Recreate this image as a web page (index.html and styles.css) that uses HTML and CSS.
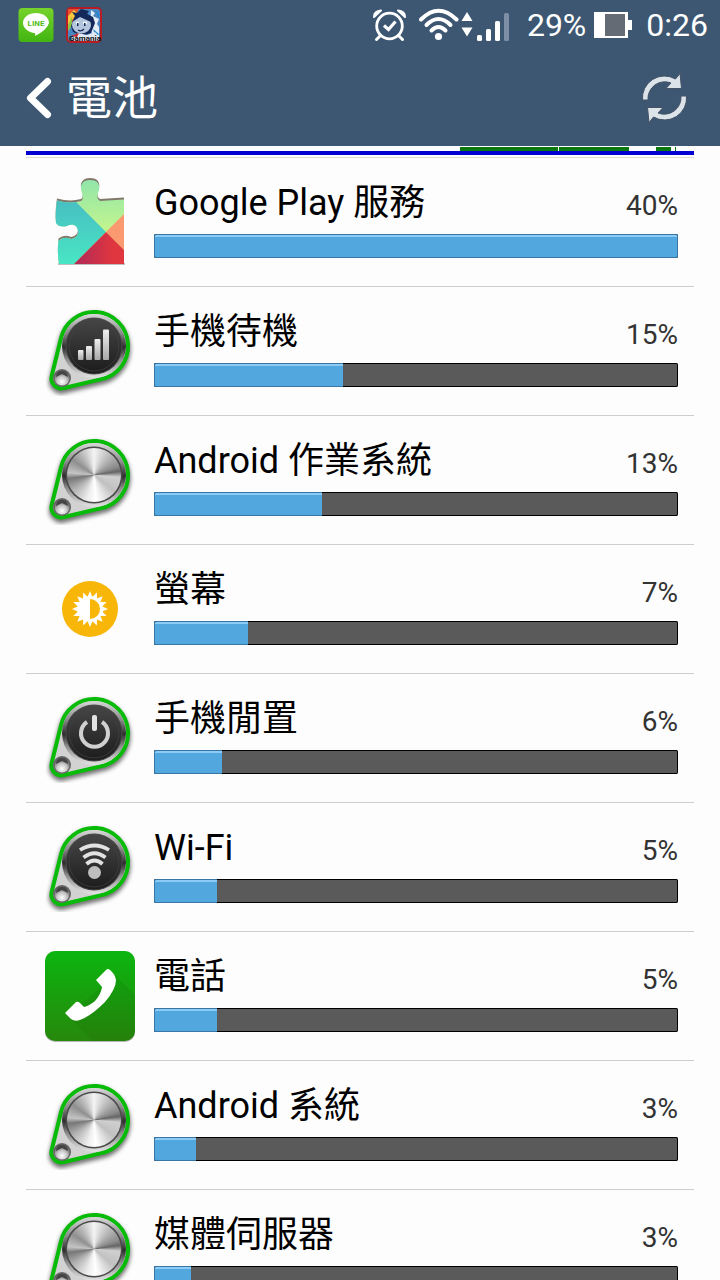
FILE: index.html
```
<!DOCTYPE html>
<html lang="zh-Hant">
<head>
    <meta charset="UTF-8">
    <meta name="viewport" content="width=device-width, initial-scale=1">
    <title>電池</title>
    <link rel="stylesheet" href="styles.css">
</head>
<body>
    <!-- shared icon parts -->
    <svg class="sprite" width="0" height="0" aria-hidden="true">
        <defs>
            <linearGradient id="rim" x1="0" y1="0" x2="0" y2="1">
                <stop offset="0" stop-color="#d8d8d8"/>
                <stop offset="0.3" stop-color="#8a8a8a"/>
                <stop offset="0.52" stop-color="#2c2c2c"/>
                <stop offset="0.7" stop-color="#8a8a8a"/>
                <stop offset="1" stop-color="#e4e4e4"/>
            </linearGradient>
            <linearGradient id="face" x1="0" y1="0" x2="0" y2="1">
                <stop offset="0" stop-color="#464646"/>
                <stop offset="1" stop-color="#1c1c1c"/>
            </linearGradient>
            <linearGradient id="glyph" x1="0" y1="0" x2="0" y2="1">
                <stop offset="0" stop-color="#efefef"/>
                <stop offset="1" stop-color="#a8a8a8"/>
            </linearGradient>
            <radialGradient id="rivet" cx="0.5" cy="0.75" r="0.7">
                <stop offset="0" stop-color="#ffffff"/>
                <stop offset="0.5" stop-color="#c4c4c4"/>
                <stop offset="1" stop-color="#505050"/>
            </radialGradient>
            <filter id="soft" x="-20%" y="-20%" width="140%" height="140%">
                <feGaussianBlur stdDeviation="2.2"/>
            </filter>
            <symbol id="knob" viewBox="0 0 90 90">
                <path d="M15.8 33A34 34 0 1 1 55.3 73.4L19 82A10 10 0 0 1 6.700 70Z" transform="translate(0 3)" fill="#444" stroke="#444" stroke-width="5" opacity="0.75" filter="url(#soft)"/>
                <path d="M15.8 33A34 34 0 1 1 55.3 73.4L19 82A10 10 0 0 1 6.700 70Z" fill="#d2d2d2" stroke="#09bb09" stroke-width="4"/>
                <circle cx="49" cy="40" r="32" fill="url(#rim)"/>
                <circle cx="49" cy="40" r="28.5" fill="#4a4a4a"/>
                <circle cx="17" cy="72" r="9" fill="#666"/>
                <circle cx="17" cy="72" r="7.5" fill="url(#rivet)"/>
                <path d="M11 71a6 6 0 0 1 12 0l-6-3z" fill="#444"/>
            </symbol>
            <symbol id="dark-face" viewBox="0 0 90 90">
                <circle cx="49" cy="40" r="27.5" fill="url(#face)"/>
                <circle cx="49" cy="40" r="25" fill="none" stroke="#444" stroke-width="0.7"/>
            </symbol>
        </defs>
    </svg>

    <div class="app">
        <header>
            <div class="status-bar">
                <div class="notices">
                    <svg width="36" height="36" viewBox="0 0 36 36" role="img" aria-label="LINE">
                        <defs>
                            <linearGradient id="line-bg" x1="0" y1="0" x2="0" y2="1">
                                <stop offset="0" stop-color="#76d32b"/>
                                <stop offset="1" stop-color="#42b512"/>
                            </linearGradient>
                        </defs>
                        <rect x="0.5" y="1" width="35" height="34" rx="4" fill="url(#line-bg)"/>
                        <path d="M18 6C11 6 5 10 5 16C5 21 10 25 16 26Q18 26 17 29Q29 23 31 16C31 10 25 6 18 6Z" fill="#fff"/>
                        <text x="18" y="19" text-anchor="middle" class="line-text">LINE</text>
                    </svg>
                    <svg width="36" height="36" viewBox="0 0 36 36" aria-hidden="true">
                        <rect width="36" height="36" rx="5" fill="#b71c24"/>
                        <rect x="2" y="2" width="32" height="32" rx="3" fill="#4a86c0"/>
                        <path d="M2 2h11L5 18H2z" fill="#e8542c"/>
                        <path d="M2 9l6-6 3 3-8 12H2z" fill="#f8c83c"/>
                        <path d="M2 18l4-8v9l-4 5z" fill="#8cc44a"/>
                        <path d="M25 3l4 3-2 3 6 3-2 5 2 3v13h-4l-5-11z" fill="#e4eef8"/>
                        <path d="M29 4l4 2v5zM27 22l6 5-3 4z" fill="#2389d0"/>
                        <path d="M5 19L9 9 6 5l5 1 4-4 8 2-2 3 6 3 2 6-4 10-9 3-9-4z" fill="#14285a"/>
                        <ellipse cx="15.5" cy="18" rx="9.5" ry="8.5" fill="#b4c6de"/>
                        <path d="M6 15l8-5 11 5 2-3-6-5-10 1z" fill="#14285a"/>
                        <path d="M10 16h3M17 16h4" stroke="#f4f8ff" stroke-width="2.5"/>
                        <path d="M11 16h1.500v3H11zM18 16h1.500v3H18z" fill="#14285a"/>
                        <path d="M12 23q3 2 6-1" fill="none" stroke="#14285a" stroke-width="1.200"/>
                        <path d="M6 30l6-4 9 2 8-3 4 4v5H6z" fill="#dfe8f4"/>
                        <path d="M5 29l8-3-2 4z" fill="#cc242b"/>
                        <text x="19" y="34" text-anchor="middle" class="game-text">Gamania</text>
                    </svg>
                </div>
                <div class="system">
                    <svg width="34" height="34" viewBox="0 0 34 34" aria-hidden="true" fill="none" stroke="#fff">
                        <circle cx="16.5" cy="18" r="12.8" stroke-width="2.800"/>
                        <path d="M11 17.500l4.500 4 7-8" stroke-width="3.200"/>
                        <path d="M7.500 27.500l-4 4M25.500 27.500l4 4" stroke-width="3" stroke-linecap="round"/>
                        <path d="M1 9Q1 3 8 2.500zM32 9Q32 3 25 2.500z" fill="#fff" stroke-width="2" stroke-linejoin="round"/>
                    </svg>
                    <svg class="wifi" width="54" height="34" viewBox="0 0 54 34" aria-hidden="true" fill="none" stroke="#fff">
                        <path d="M2 11.500Q19.500-6 37.500 11.500" stroke-width="4" stroke-linecap="round"/>
                        <path d="M7.500 17Q19.500 5 31.500 17" stroke-width="4" stroke-linecap="round"/>
                        <path d="M12.500 22.500Q19.500 15.500 26.500 22.500" stroke-width="4" stroke-linecap="round"/>
                        <circle cx="19.500" cy="28.500" r="3.600" fill="#fff" stroke="none"/>
                        <path d="M48 4l5.500 9h-11zM48 28.500l5.500-9h-11z" fill="#fff" stroke="none"/>
                    </svg>
                    <svg class="signal" width="34" height="34" viewBox="0 0 34 34" aria-hidden="true">
                        <rect x="0" y="27" width="5" height="6" rx="1.500" fill="#fff"/>
                        <rect x="9" y="21" width="5" height="12" rx="1.500" fill="#fff"/>
                        <rect x="18" y="13" width="5" height="20" rx="1.500" fill="#fff"/>
                        <rect x="27" y="5" width="5" height="28" rx="1.500" fill="#7d8fa4"/>
                    </svg>
                    <span class="level">29%</span>
                    <svg class="cell" width="38" height="28" viewBox="0 0 38 28" aria-hidden="true">
                        <path d="M0 1h34v8h4v10h-4v8H0z" fill="#fff"/>
                        <rect x="11" y="3" width="20" height="22" fill="#646b75"/>
                    </svg>
                    <span class="clock">0:26</span>
                </div>
            </div>
            <div class="title-bar">
                <a class="back" href="#">
                    <svg width="26" height="42" viewBox="0 0 26 42" aria-hidden="true">
                        <path d="M21.5 4.500L4.500 21 21.5 37.500" fill="none" stroke="#fff" stroke-width="7" stroke-linecap="round" stroke-linejoin="round"/>
                    </svg>
                    <h1>電池</h1>
                </a>
                <button class="refresh" type="button" aria-label="重新整理">
                    <svg width="48" height="52" viewBox="0 0 48 52" aria-hidden="true">
                        <defs>
                            <path id="turn" d="M2.500 28A22 22 0 0 1 35.500 7L40 1.500 41.500 16.500H26L31 11A16.800 16.800 0 0 0 8 28Z"/>
                        </defs>
                        <g fill="#dce3e9" stroke="#445264" stroke-width="1" stroke-linejoin="round">
                            <use href="#turn"/>
                            <use href="#turn" transform="rotate(180 24.5 26)"/>
                        </g>
                    </svg>
                </button>
            </div>
        </header>

        <main>
            <div class="timeline">
                <div class="charge">
                    <span class="gap wide"></span>
                    <span class="run first"></span>
                    <span class="run second"></span>
                    <span class="gap"></span>
                    <span class="run third"></span>
                    <span class="gap small"></span>
                    <span class="run tick"></span>
                </div>
                <div class="awake"></div>
            </div>

            <ul class="usage">
                <li>
                    <svg class="icon" viewBox="0 0 90 90" aria-hidden="true">
                        <defs>
                            <linearGradient id="teal" x1="0" y1="0" x2="0" y2="1">
                                <stop offset="0" stop-color="#48bdc2"/>
                                <stop offset="1" stop-color="#48e8c4"/>
                            </linearGradient>
                            <linearGradient id="lime" x1="0" y1="0" x2="0" y2="1">
                                <stop offset="0" stop-color="#8fe5ac"/>
                                <stop offset="0.6" stop-color="#c4f58c"/>
                            </linearGradient>
                            <linearGradient id="red" x1="0" y1="0" x2="1" y2="0">
                                <stop offset="0" stop-color="#a9285c"/>
                                <stop offset="0.7" stop-color="#e0363f"/>
                            </linearGradient>
                            <path id="piece" d="M12 22.500Q25 26 36 23Q39 21 37 15C34 8 37 2 45 2C54 2 56 8 53 15Q51 21 55 23L79 21.500V86H14Q12 74 13.500 62.500Q19 58 26 61C32 60 33 56 33 54C33 47 27 45 22 48Q14 50 11 45Q10 35 12 22.500Z"/>
                            <clipPath id="piece-clip"><use href="#piece"/></clipPath>
                        </defs>
                        <use href="#piece" fill="#81776a" transform="translate(0 -1)"/>
                        <path d="M13 87h67" stroke="#aaa" stroke-width="1.500"/>
                        <g clip-path="url(#piece-clip)" transform="translate(0 1)">
                            <path d="M0 0h90v90H0z" fill="url(#lime)"/>
                            <path d="M0 20h27L61 54 25 90H0z" fill="url(#teal)"/>
                            <path d="M61 54l25-25v50z" fill="#fb9a70"/>
                            <path d="M61 54l25 25v11H25z" fill="url(#red)"/>
                        </g>
                    </svg>
                    <div class="info">
                        <div class="caption"><h2>Google Play 服務</h2><span>40%</span></div>
                        <div class="bar"><div class="fill full" style="width: 100%"></div></div>
                    </div>
                </li>
                <li>
                    <svg class="icon" viewBox="0 0 90 90" aria-hidden="true">
                        <use href="#knob"/>
                        <use href="#dark-face"/>
                        <g fill="url(#glyph)">
                            <rect x="33" y="44" width="5.500" height="10" rx="1"/>
                            <rect x="41" y="40" width="6" height="14" rx="1"/>
                            <rect x="49.500" y="33" width="6" height="21" rx="1"/>
                            <rect x="58" y="23.500" width="6" height="30.500" rx="1"/>
                        </g>
                    </svg>
                    <div class="info">
                        <div class="caption"><h2>手機待機</h2><span>15%</span></div>
                        <div class="bar"><div class="fill" style="width: 36%"></div></div>
                    </div>
                </li>
                <li>
                    <div class="icon metal">
                        <svg viewBox="0 0 90 90" aria-hidden="true"><use href="#knob"/></svg>
                    </div>
                    <div class="info">
                        <div class="caption"><h2>Android 作業系統</h2><span>13%</span></div>
                        <div class="bar"><div class="fill" style="width: 32%"></div></div>
                    </div>
                </li>
                <li>
                    <svg class="icon" viewBox="0 0 90 90" aria-hidden="true">
                        <circle cx="45" cy="45" r="28" fill="#f8b608"/>
                        <polygon transform="translate(45 45)" fill="#fff" points="0,-18 2.400,-12.300 6.900,-16.600 6.900,-10.400 12.700,-12.700 10.400,-6.900 16.600,-6.900 12.300,-2.400 18,0 12.300,2.400 16.600,6.900 10.400,6.900 12.700,12.700 6.900,10.400 6.900,16.600 2.400,12.300 0,18 -2.400,12.300 -6.900,16.600 -6.900,10.400 -12.700,12.700 -10.400,6.900 -16.600,6.900 -12.300,2.400 -18,0 -12.300,-2.400 -16.600,-6.900 -10.400,-6.900 -12.700,-12.700 -6.900,-10.400 -6.900,-16.600 -2.400,-12.300"/>
                        <path d="M45 35a10 10 0 0 1 0 20z" fill="#f8b608"/>
                    </svg>
                    <div class="info">
                        <div class="caption"><h2>螢幕</h2><span>7%</span></div>
                        <div class="bar"><div class="fill" style="width: 18%"></div></div>
                    </div>
                </li>
                <li>
                    <svg class="icon" viewBox="0 0 90 90" aria-hidden="true">
                        <use href="#knob"/>
                        <use href="#dark-face"/>
                        <path d="M42 29A13.500 13.500 0 1 0 57 29" fill="none" stroke="#d0d0d0" stroke-width="4"/>
                        <rect x="47" y="22" width="5" height="16" rx="2" fill="#e2e2e2"/>
                    </svg>
                    <div class="info">
                        <div class="caption"><h2>手機閒置</h2><span>6%</span></div>
                        <div class="bar"><div class="fill" style="width: 13%"></div></div>
                    </div>
                </li>
                <li>
                    <svg class="icon" viewBox="0 0 90 90" aria-hidden="true">
                        <use href="#knob"/>
                        <use href="#dark-face"/>
                        <g fill="none" stroke="#e2e2e2" stroke-width="3.800">
                            <path d="M35 28Q49.500 19 64 28"/>
                            <path d="M38.500 35.500Q49.500 27 60.500 35.500"/>
                            <path d="M41.500 42Q49.500 35 57.500 42"/>
                        </g>
                        <circle cx="49.500" cy="50.500" r="6.500" fill="#bebebe"/>
                    </svg>
                    <div class="info">
                        <div class="caption"><h2>Wi-Fi</h2><span>5%</span></div>
                        <div class="bar"><div class="fill" style="width: 12%"></div></div>
                    </div>
                </li>
                <li>
                    <svg class="icon" viewBox="0 0 90 90" aria-hidden="true">
                        <defs>
                            <linearGradient id="phone-bg" x1="0" y1="0" x2="0" y2="1">
                                <stop offset="0" stop-color="#0bb50f"/>
                                <stop offset="1" stop-color="#27880c"/>
                            </linearGradient>
                        </defs>
                        <rect y="1" width="90" height="90" rx="10" fill="#b5b5b5"/>
                        <rect width="90" height="90" rx="10" fill="url(#phone-bg)"/>
                        <path d="M70 24l20 20v36q0 10-10 10H48L22 65z" fill="#000" opacity="0.05"/>
                        <path d="M51 29L61 19Q63 17 65 19Q70 23 71 29Q71 38 60 51Q46 65 35 69Q30 71 26 68L20 62L31 51Q33 50 35 52L39 56Q44 55 50 50Q56 43 57 36Z" fill="#fff"/>
                    </svg>
                    <div class="info">
                        <div class="caption"><h2>電話</h2><span>5%</span></div>
                        <div class="bar"><div class="fill" style="width: 12%"></div></div>
                    </div>
                </li>
                <li>
                    <div class="icon metal">
                        <svg viewBox="0 0 90 90" aria-hidden="true"><use href="#knob"/></svg>
                    </div>
                    <div class="info">
                        <div class="caption"><h2>Android 系統</h2><span>3%</span></div>
                        <div class="bar"><div class="fill" style="width: 8%"></div></div>
                    </div>
                </li>
                <li>
                    <div class="icon metal">
                        <svg viewBox="0 0 90 90" aria-hidden="true"><use href="#knob"/></svg>
                    </div>
                    <div class="info">
                        <div class="caption"><h2>媒體伺服器</h2><span>3%</span></div>
                        <div class="bar"><div class="fill" style="width: 7%"></div></div>
                    </div>
                </li>
            </ul>
        </main>
    </div>
</body>
</html>
```
FILE: styles.css
```
* {
    box-sizing: border-box;
}
body {
    margin: 0;
    background-color: #fdfdfd;
    color: #000;
    font-family: Roboto, "Noto Sans CJK TC", sans-serif;
}
h1, h2 {
    margin: 0;
    font-weight: 400;
}
.sprite {
    position: absolute;
}
.app {
    display: flex;
    flex-direction: column;
    height: 100vh;
}

/* header */
header {
    flex: none;
    background-color: #3d5773;
    color: #fff;
}
.status-bar {
    display: flex;
    justify-content: space-between;
    align-items: center;
    height: 50px;
    padding: 0 12px 0 18px;
}
.notices {
    display: flex;
    gap: 12px;
}
.line-text {
    font-size: 8px;
    font-weight: 700;
    fill: #55bd20;
}
.game-text {
    font-size: 8px;
    font-weight: 700;
    fill: #111;
}
.system {
    display: flex;
    align-items: center;
    font-size: 32px;
    line-height: 50px;
}
.wifi {
    margin-left: 12px;
}
.signal {
    margin-left: 4px;
}
.level {
    margin-left: 16px;
}
.cell {
    margin: 0 14px 0 8px;
}
.title-bar {
    display: flex;
    justify-content: space-between;
    align-items: center;
    height: 96px;
    padding: 0 32px 0 26px;
}
.back {
    display: flex;
    align-items: center;
    gap: 14px;
    color: inherit;
    text-decoration: none;
}
h1 {
    font-size: 46px;
    line-height: 68px;
}
.refresh {
    display: flex;
    padding: 0;
    border: 0;
    background: none;
}

/* battery history strip */
main {
    flex: 1;
    min-height: 0;
    padding: 0 26px;
    overflow-y: auto;
    scrollbar-width: none;
}
.timeline {
    padding: 1px 0 2px;
    border-bottom: 1px solid #dcdcdc;
}
.charge {
    display: flex;
    height: 4px;
}
.awake {
    height: 4px;
    background-color: #0000d0;
}
.run {
    background-color: #0a780f;
}
.gap {
    width: 4%;
}
.gap.wide {
    width: 65%;
}
.gap.small {
    width: 4px;
}
.run.first {
    width: 98px;
    margin-right: 1px;
}
.run.second {
    width: 70px;
}
.run.third {
    width: 15px;
}
.run.tick {
    width: 1px;
}

/* usage list */
.usage {
    margin: 0;
    padding: 0;
    list-style: none;
}
.usage li {
    display: flex;
    align-items: center;
    gap: 19px;
    height: 129px;
    padding: 0 16px 0 19px;
    border-bottom: 1px solid #cdcdcd;
}
.icon {
    flex: none;
    width: 90px;
    height: 90px;
    overflow: visible;
}
.metal {
    position: relative;
}
.metal svg {
    display: block;
    overflow: visible;
}
.metal::after {
    content: "";
    position: absolute;
    top: 13px;
    left: 22px;
    width: 54px;
    height: 54px;
    border-radius: 50%;
    background: conic-gradient(#f4f4f4, #b8b8b8 40deg, #8c8c8c 70deg, #666 82deg, #d0d0d0 95deg, #c0c0c0 130deg, #fff 175deg, #eee 195deg, #b0b0b0 235deg, #777 262deg, #c4c4c4 275deg, #8f8f8f 305deg, #bbb 330deg, #f4f4f4);
}
.info {
    flex: 1;
}
.caption {
    display: flex;
    justify-content: space-between;
    align-items: center;
    height: 62px;
}
.caption h2 {
    font-size: 36px;
    line-height: 62px;
}
.caption span {
    padding-top: 4px;
    color: #333;
    font-size: 28px;
}
.bar {
    height: 24px;
    margin-bottom: 14px;
    border-radius: 2px;
    background-color: #5a5a5a;
    box-shadow: inset 0 0 0 1px #000;
}
.fill {
    height: 24px;
    border: 1px solid #3876a6;
    border-right-width: 0;
    border-radius: 2px 0 0 2px;
    background-color: #52a7df;
    box-shadow: inset 0 2px #8bcbf5;
}
.fill.full {
    border-right-width: 1px;
    border-radius: 2px;
}
```
